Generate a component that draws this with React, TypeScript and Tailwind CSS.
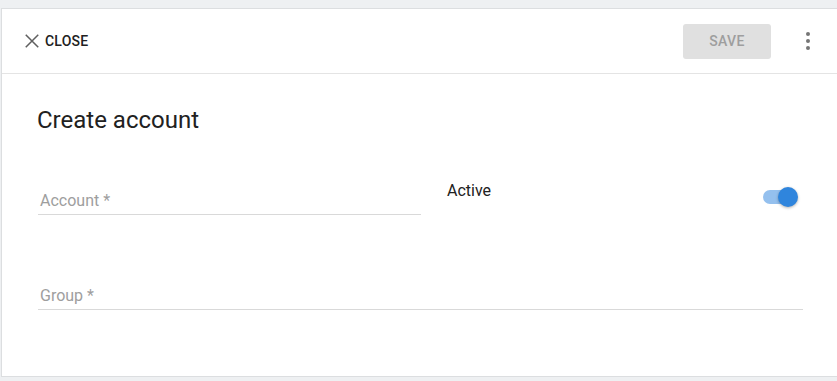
function CloseIcon() {
  return (
    <svg width="14" height="14" viewBox="0 0 14 14" fill="none" stroke="#5f5f5f" strokeWidth="1.5">
      <path d="M0.75 0.75 L13.25 13.25 M13.25 0.75 L0.75 13.25" />
    </svg>
  );
}

function Header() {
  return (
    <div className="flex h-[65px] items-center justify-between border-b border-[#e4e4e4] pl-[23px] pr-[27px]">
      <button className="flex items-center gap-[6px] text-[14px] font-medium tracking-[0.2px] text-[#212121]">
        <CloseIcon />
        CLOSE
      </button>
      <div className="flex items-center gap-[35px]">
        <button className="flex h-[35px] w-[88px] items-center justify-center rounded-[3px] bg-[#e0e0e0] text-[14px] font-medium tracking-[0.3px] text-[#9e9e9e]">
          SAVE
        </button>
        <div className="flex flex-col items-center gap-[3px]">
          <span className="size-[4px] rounded-full bg-[#757575]" />
          <span className="size-[4px] rounded-full bg-[#757575]" />
          <span className="size-[4px] rounded-full bg-[#757575]" />
        </div>
      </div>
    </div>
  );
}

function Field({ label, className }: { label: string; className?: string }) {
  return (
    <div className={className}>
      <div className="border-b border-[#d9d9d9] pb-[3px] pl-[2px] text-[16px] leading-[20px] text-[#9e9e9e]">{label}</div>
    </div>
  );
}

function Toggle() {
  return (
    <div className="relative h-[20px] w-[35px]">
      <div className="absolute left-0 top-[3px] h-[14px] w-[34px] rounded-full bg-[#94c0ee]" />
      <div className="absolute right-0 top-0 size-[20px] rounded-full bg-[#2f85dd] shadow-[0_1px_3px_rgba(0,0,0,0.3)]" />
    </div>
  );
}

export default function App() {
  return (
    <div className="h-[381px] w-full overflow-hidden bg-[#eef0f2] pl-[1px] pt-[8px] font-['Roboto',sans-serif]">
      <div className="h-[369px] border-b border-l border-t border-[#dcdee0] bg-white">
        <Header />
        <div className="px-[35px] pt-[32px]">
          <h1 className="text-[24px] leading-[28px] text-[#212121]">Create account</h1>
          <div className="mt-[47px] flex w-[766px] gap-[26px] pl-[1px]">
            <Field label="Account *" className="w-[383px] pt-[10px]" />
            <div className="flex flex-1 items-start justify-between pr-[5px]">
              <span className="text-[16px] leading-[20px] text-[#212121]">Active</span>
              <div className="pt-[6px]">
                <Toggle />
              </div>
            </div>
          </div>
          <Field label="Group *" className="mt-[71px] w-[766px] pl-[1px]" />
        </div>
      </div>
    </div>
  );
}
